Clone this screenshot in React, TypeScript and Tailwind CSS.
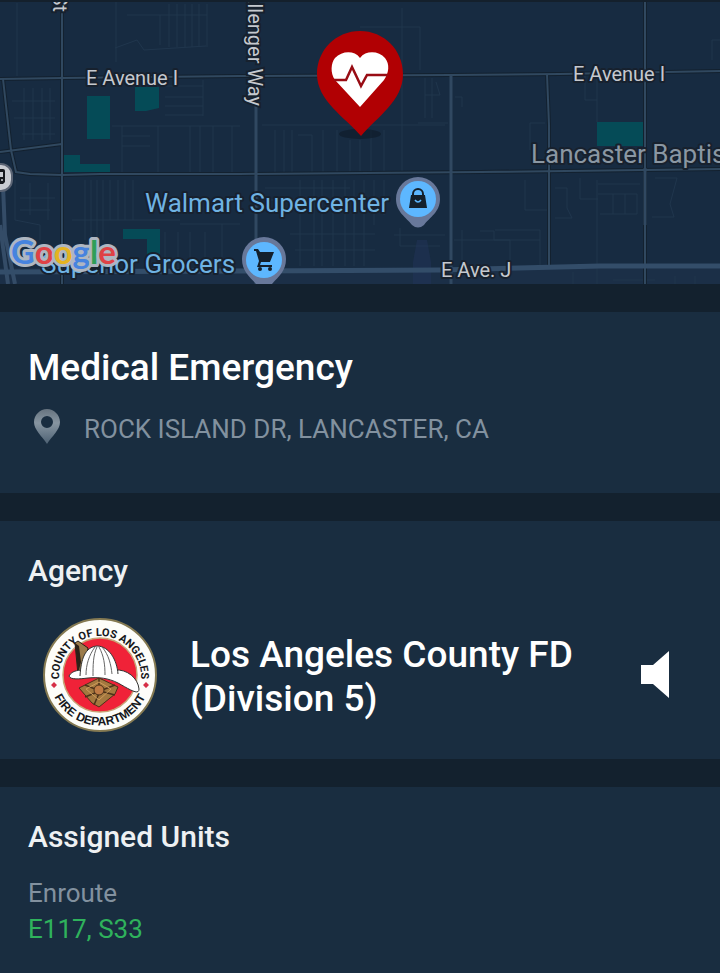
import React from 'react';

const minorRoads = [
    'M115 48 L137 40 L144 50 L206 46 M116 2 V62 M127 15 H207 M160 15 V45 M169 4 V47 M177 4 V47 M185 4 V47 M192 4 V47 M199 4 V47 M207 4 V47',
    'M17 3 V76 M12 101 H55 M14 118 H55 M22 134 H55 M24 88 V140 M33 88 V140 M42 88 V140 M50 88 V140',
    'M165 86 H203 M165 97 H203 M165 106 H203 M165 115 H203 M203 80 V116 M112 126 H240 M122 136 H150 M122 146 H150 M122 126 V172 M158 126 V172 M190 126 V172 M200 126 V172 M213 126 V172 M232 126 V172',
    'M15 180 V220 L40 225 V240 M20 198 H55 M20 210 H50 M30 183 V215 M48 183 V220',
    'M85 180 V240 M91 180 V240 M97 180 V240 M103 180 V240 M110 180 V220 M118 180 V220 M125 180 V220 M133 180 V220 M72 220 H180 M180 224 H240 M165 232 V268 M178 232 V268 M190 232 V262 M205 232 V262 M222 224 V262',
    'M262 125 H445 M275 130 V172 M284 130 V172 M292 130 V172 M298 135 H312 V172 M323 130 V172 M337 130 V172 M350 140 V172 M360 140 V172 M371 130 V172 M384 130 V172 M402 8 V172 M360 27 H420 V70 M432 78 V118 M425 78 V118',
    'M265 188 H350 M265 200 H330 M290 234 H375 M295 250 H375 M300 180 V266 M314 180 V266 M322 180 V266 M333 180 V266 M345 180 V266 M354 180 V266 M364 180 V266 M374 180 V225 M384 180 V215 M394 235 H445 M400 228 V246 H440',
    'M448 123 H418 M436 82 L440 95 H425 M455 97 H462 V107 M454 240 H540 M462 230 V260 M480 231 H494 V240 H510 V262 M495 230 H540 V265 M525 180 V210 H548 M555 188 H567 V208 L572 218 H555 M580 178 V199 H598 M597 180 V284 M598 184 H640 M598 194 H637 V214 H600 M613 194 V214 M625 194 V214 M655 178 H677 L670 204 L674 217 H652',
    'M585 75 V100 H597 V122 M597 77 V100 M530 123 H545 M530 123 V150 M712 40 H720 M712 40 V60 M613 280 H655 M675 276 V284 M573 272 V284 M695 276 V284',
];

const mainRoads = [
    'M0 79 L62 78 L240 76 L450 75 L560 74 L720 71',
    'M0 152 L62 144',
    'M3 79 L11 150 L16 172 L30 174 L62 175 L100 174 L240 174 L480 172 L720 169',
    'M62 12 V284',
    'M547 74 L549 125 V268',
    'M645 2 V284',
];

const wideRoads = ['M256 104 V284', 'M451 75 V284', 'M645 168 V225'];

const MapLabel = ({ x, y, size, color, children }: { x: number; y: number; size: number; color: string; children: string }) => (
    <text
        x={x}
        y={y}
        fontSize={size}
        fill={color}
        stroke="#17212e"
        strokeWidth="4"
        strokeLinejoin="round"
        paintOrder="stroke"
    >
        {children}
    </text>
);

const IncidentMap = () => (
    <svg
        viewBox="0 0 720 284"
        preserveAspectRatio="xMidYMid slice"
        className="block w-full font-[Roboto,sans-serif]"
        role="img"
        aria-label="Map of the incident"
    >
        <rect width="720" height="284" fill="#172b41" />
        <path d="M0 268 H720 V284 H0 Z" fill="#1b2f47" />

        {/* Parks */}
        <g fill="#054b57">
            <path d="M87 96 H110 V139 H87 Z M135 87 H159 V108 L146 111 H135 Z M597 122 H643 V146 H597 Z" />
            <path d="M64 155 H80 V164 H110 V172 H64 Z M123 229 H160 V254 H147 V239 H123 Z" />
        </g>

        <g fill="none" stroke="#20364d" strokeWidth="1">
            {minorRoads.map(d => <path key={d} d={d} />)}
        </g>
        <path d="M413 284 V262 L417 240 H427 L431 262 V284 Z" fill="#22335a" opacity=".5" />

        {/* Main roads, with a darker casing under each */}
        <g fill="none" stroke="#13212f" strokeWidth="4">
            {mainRoads.map(d => <path key={d} d={d} />)}
        </g>
        <g fill="none" stroke="#30485f" strokeWidth="2">
            {mainRoads.map(d => <path key={d} d={d} />)}
        </g>
        <g fill="none" stroke="#304861" strokeWidth="3">
            {wideRoads.map(d => <path key={d} d={d} />)}
        </g>
        <path d="M3 185 L5 235 L15 284 M0 225 L8 284" fill="none" stroke="#344c67" strokeWidth="4" />
        <path d="M0 272 L240 271 L440 270 L600 266 L720 266" fill="none" stroke="#334d69" strokeWidth="5" />

        {/* Station badge cut off by the left edge */}
        <rect x="-16" y="164" width="28" height="27" rx="11" fill="#c9ccd2" stroke="#5b6474" strokeWidth="2" />
        <path d="M-4 169 H3 Q5 169 5 171 V182 L3 184 H-4 Z" fill="#15181d" />
        <path d="M-3 172 H3 V177 H-3 Z" fill="#c9ccd2" />
        <circle cx="2" cy="180" r="1" fill="#c9ccd2" />

        <MapLabel x={86} y={85} size={20} color="#c5c9cf">E Avenue I</MapLabel>
        <MapLabel x={573} y={81} size={20} color="#c5c9cf">E Avenue I</MapLabel>
        <MapLabel x={441} y={277} size={20} color="#c5c9cf">E Ave. J</MapLabel>
        <g transform="translate(248 106) rotate(90)">
            <text textAnchor="end" fontSize="20" fill="#c5c9cf" stroke="#17212e" strokeWidth="4" paintOrder="stroke">Challenger Way</text>
        </g>
        <g transform="translate(53 12) rotate(90)">
            <text textAnchor="end" fontSize="20" fill="#c5c9cf" stroke="#17212e" strokeWidth="4" paintOrder="stroke">10th St</text>
        </g>
        <MapLabel x={531} y={163} size={26} color="#8a97a3">Lancaster Baptist</MapLabel>
        <MapLabel x={145} y={212} size={26} color="#6fb3e3">Walmart Supercenter</MapLabel>
        <MapLabel x={41} y={273} size={26} color="#6fb3e3">Superior Grocers</MapLabel>

        {/* Walmart pin */}
        <path d="M418 177 A22 22 0 0 1 440 199 C440 212 430 217 424 225 Q418 230 412 225 C406 217 396 212 396 199 A22 22 0 0 1 418 177 Z" fill="#68789a" />
        <circle cx="418" cy="199" r="18" fill="#5db7ff" />
        <path d="M411 195 H425 L427 208 H409 Z" fill="#14202c" />
        <path d="M413 196 V194 A5 5 0 0 1 423 194 V196" fill="none" stroke="#14202c" strokeWidth="2" />
        <path d="M415 200 Q418 204 421 200" fill="none" stroke="#5db7ff" strokeWidth="1.5" />

        {/* Grocery pin */}
        <path d="M264 237 A22 22 0 0 1 286 259 C286 271 279 276 272 284 H256 C249 276 242 271 242 259 A22 22 0 0 1 264 237 Z" fill="#68789a" />
        <circle cx="264" cy="260" r="18" fill="#5db7ff" />
        <path d="M254 249 H258 L260 252 H274 L270 262 H261 L260 265 H272 V267 H257 L259 261 L256 251 H254 Z" fill="#14202c" />
        <circle cx="260" cy="269" r="2" fill="#14202c" />
        <circle cx="270" cy="269" r="2" fill="#14202c" />

        {/* Incident pin */}
        <ellipse cx="360" cy="134" rx="21" ry="5" fill="#0d1926" opacity=".6" />
        <path d="M360 31 C384 31 403 50 403 74 C403 101 377 117 361 136 C345 117 317 101 317 74 C317 50 336 31 360 31 Z" fill="#b10003" />
        <path d="M360 58 C366 50 379 51 385 58 C390 64 389 73 384 80 L360 107 L335 80 C330 73 331 63 335 58 C342 51 354 50 360 58 Z" fill="#fff" />
        <path d="M334 80 H346 L352 67 L361 86 L367 75 H388" fill="none" stroke="#980c14" strokeWidth="2.5" strokeLinejoin="miter" />

        <text x="11" y="264" fontSize="33" fontWeight="700" className="font-[Lato,sans-serif]" stroke="#aeb6c1" strokeWidth="6" strokeLinejoin="round" paintOrder="stroke">
            <tspan fill="#4683df">G</tspan>
            <tspan fill="#df4145">o</tspan>
            <tspan fill="#e5b321">o</tspan>
            <tspan fill="#4683df">g</tspan>
            <tspan fill="#2f9e58">l</tspan>
            <tspan fill="#df4145">e</tspan>
        </text>
        <rect width="720" height="2" fill="#14202c" />
    </svg>
);

const AgencySeal = () => (
    <svg viewBox="0 0 116 116" className="size-29 shrink-0" role="img" aria-label="County of Los Angeles Fire Department">
        <defs>
            <path id="seal-top" d="M17.2 64 A41 41 0 1 1 98.8 64" />
            <path id="seal-bottom" d="M7.5 58 A50.5 50.5 0 0 0 108.5 58" />
        </defs>
        <circle cx="58" cy="58" r="56" fill="#fdfdf9" stroke="#857a52" strokeWidth="2" />
        <circle cx="58" cy="58" r="37" fill="#f02238" stroke="#c8a476" strokeWidth="1.5" />
        <g fontWeight="700" fill="#16181c" textAnchor="middle">
            <text fontSize="11" className="font-[Roboto,sans-serif]">
                <textPath href="#seal-top" startOffset="50%">COUNTY OF LOS ANGELES</textPath>
            </text>
            <text fontSize="12" className="font-[Liberation_Sans,sans-serif]">
                <textPath href="#seal-bottom" startOffset="50%">FIRE DEPARTMENT</textPath>
            </text>
        </g>
        <path d="M12 65 L15 68 L12 71 L9 68 Z M104 65 L107 68 L104 71 L101 68 Z" fill="#d62f46" />
        {/* Helmet */}
        <path d="M33 26 L36 24 L46 31 L41 58 L36 58 Z" fill="#9c7c4b" stroke="#2b2118" strokeWidth="1" />
        <path d="M33 26 L37 29 L39 45 L36 57 Z" fill="#2b2118" />
        <path d="M73 53 C85 52 96 61 97 72 C97 79 87 72 76 66 C66 61 57 60 46 61 C38 62 28 63 27 59 C30 53 38 53 44 53 Z" fill="#fff" stroke="#333" strokeWidth="1" />
        <path d="M38 59 C39 42 43 30 55 29 C67 29 75 43 76 57 C66 60 51 60 38 59 Z" fill="#fff" />
        <path d="M38 59 C39 42 43 30 55 29 C67 29 75 43 76 57" fill="none" stroke="#333" strokeWidth="1" />
        <path d="M53 30 C47 38 44 48 44 58 M55 30 C51 38 51 49 51 59 M57 30 C62 39 63 48 63 58 M60 30 C67 38 69 48 70 57" fill="none" stroke="#666" strokeWidth="1" />
        {/* Badge */}
        <path d="M57 61 L76 70 L73 77 L57 90 L50 86 L37 71 Z" fill="#a3783f" stroke="#4c3119" strokeWidth="1" />
        <path d="M43 68 L58 74 L73 68 M43 80 L58 74 L73 78 M58 74 L52 88 M57 61 V74" fill="none" stroke="#4c3119" strokeWidth="1.5" />
        <path d="M44 72 L57 65 L69 72 L57 83 Z" fill="none" stroke="#cf9c5c" strokeWidth="1" />
        <circle cx="57" cy="73" r="5" fill="#c07b45" stroke="#4c3119" strokeWidth="1" />
    </svg>
);

const Card = ({ className = '', children }: { className?: string; children: React.ReactNode }) => (
    <section className={`bg-[#192d40] px-7 ${className}`}>{children}</section>
);

export default function App() {
    return (
        <main className="flex min-h-screen flex-col gap-7 overflow-hidden bg-[#13212e] font-[Roboto,sans-serif]">
            <IncidentMap />

            <Card className="pt-8 pb-11">
                <h1 className="text-[37px] leading-12 font-medium text-white">Medical Emergency</h1>
                <div className="mt-[17px] flex items-center gap-5">
                    <svg viewBox="0 0 36 40" className="h-10 w-9" aria-hidden="true">
                        <defs>
                            <linearGradient id="place" x1="0" y1="0" x2="0" y2="1">
                                <stop offset="0" stopColor="#66737f" />
                                <stop offset=".4" stopColor="#8795a1" />
                                <stop offset="1" stopColor="#4d6173" />
                            </linearGradient>
                        </defs>
                        <path
                            fillRule="evenodd"
                            fill="url(#place)"
                            d="M19 0 C26 0 32 6 32 13 C32 21 24 27 19 35 C14 27 6 21 6 13 C6 6 12 0 19 0 Z M19 7 A6 6 0 1 0 19 19 A6 6 0 1 0 19 7 Z"
                        />
                    </svg>
                    <p className="text-[26px] leading-8 text-[#82919f]">ROCK ISLAND DR, LANCASTER, CA</p>
                </div>
            </Card>

            <Card className="pt-8 pb-[26px]">
                <h2 className="text-[30px] leading-9 font-medium text-[#eef1f3]">Agency</h2>
                <div className="mt-7 flex items-center pr-5 pl-3.5">
                    <AgencySeal />
                    <p className="ml-8 flex-1 pt-1 text-[37px] leading-11 font-medium text-white">
                        Los Angeles County FD
                        <br />
                        (Division 5)
                    </p>
                    <button type="button" aria-label="Play audio" className="cursor-pointer">
                        <svg viewBox="0 0 32 48" className="h-12 w-8" aria-hidden="true">
                            <path d="M1 14 H13 L29 0 V47 L13 33 H1 Z" fill="#fff" />
                        </svg>
                    </button>
                </div>
            </Card>

            <Card className="flex-1 pt-8 pb-7">
                <h2 className="text-[30px] leading-9 font-medium text-[#eef1f3]">Assigned Units</h2>
                <p className="mt-5 text-[26px] leading-9 text-[#82919f]">Enroute</p>
                <p className="text-[26px] leading-9 text-[#2fb25c]">E117, S33</p>
            </Card>
        </main>
    );
}
